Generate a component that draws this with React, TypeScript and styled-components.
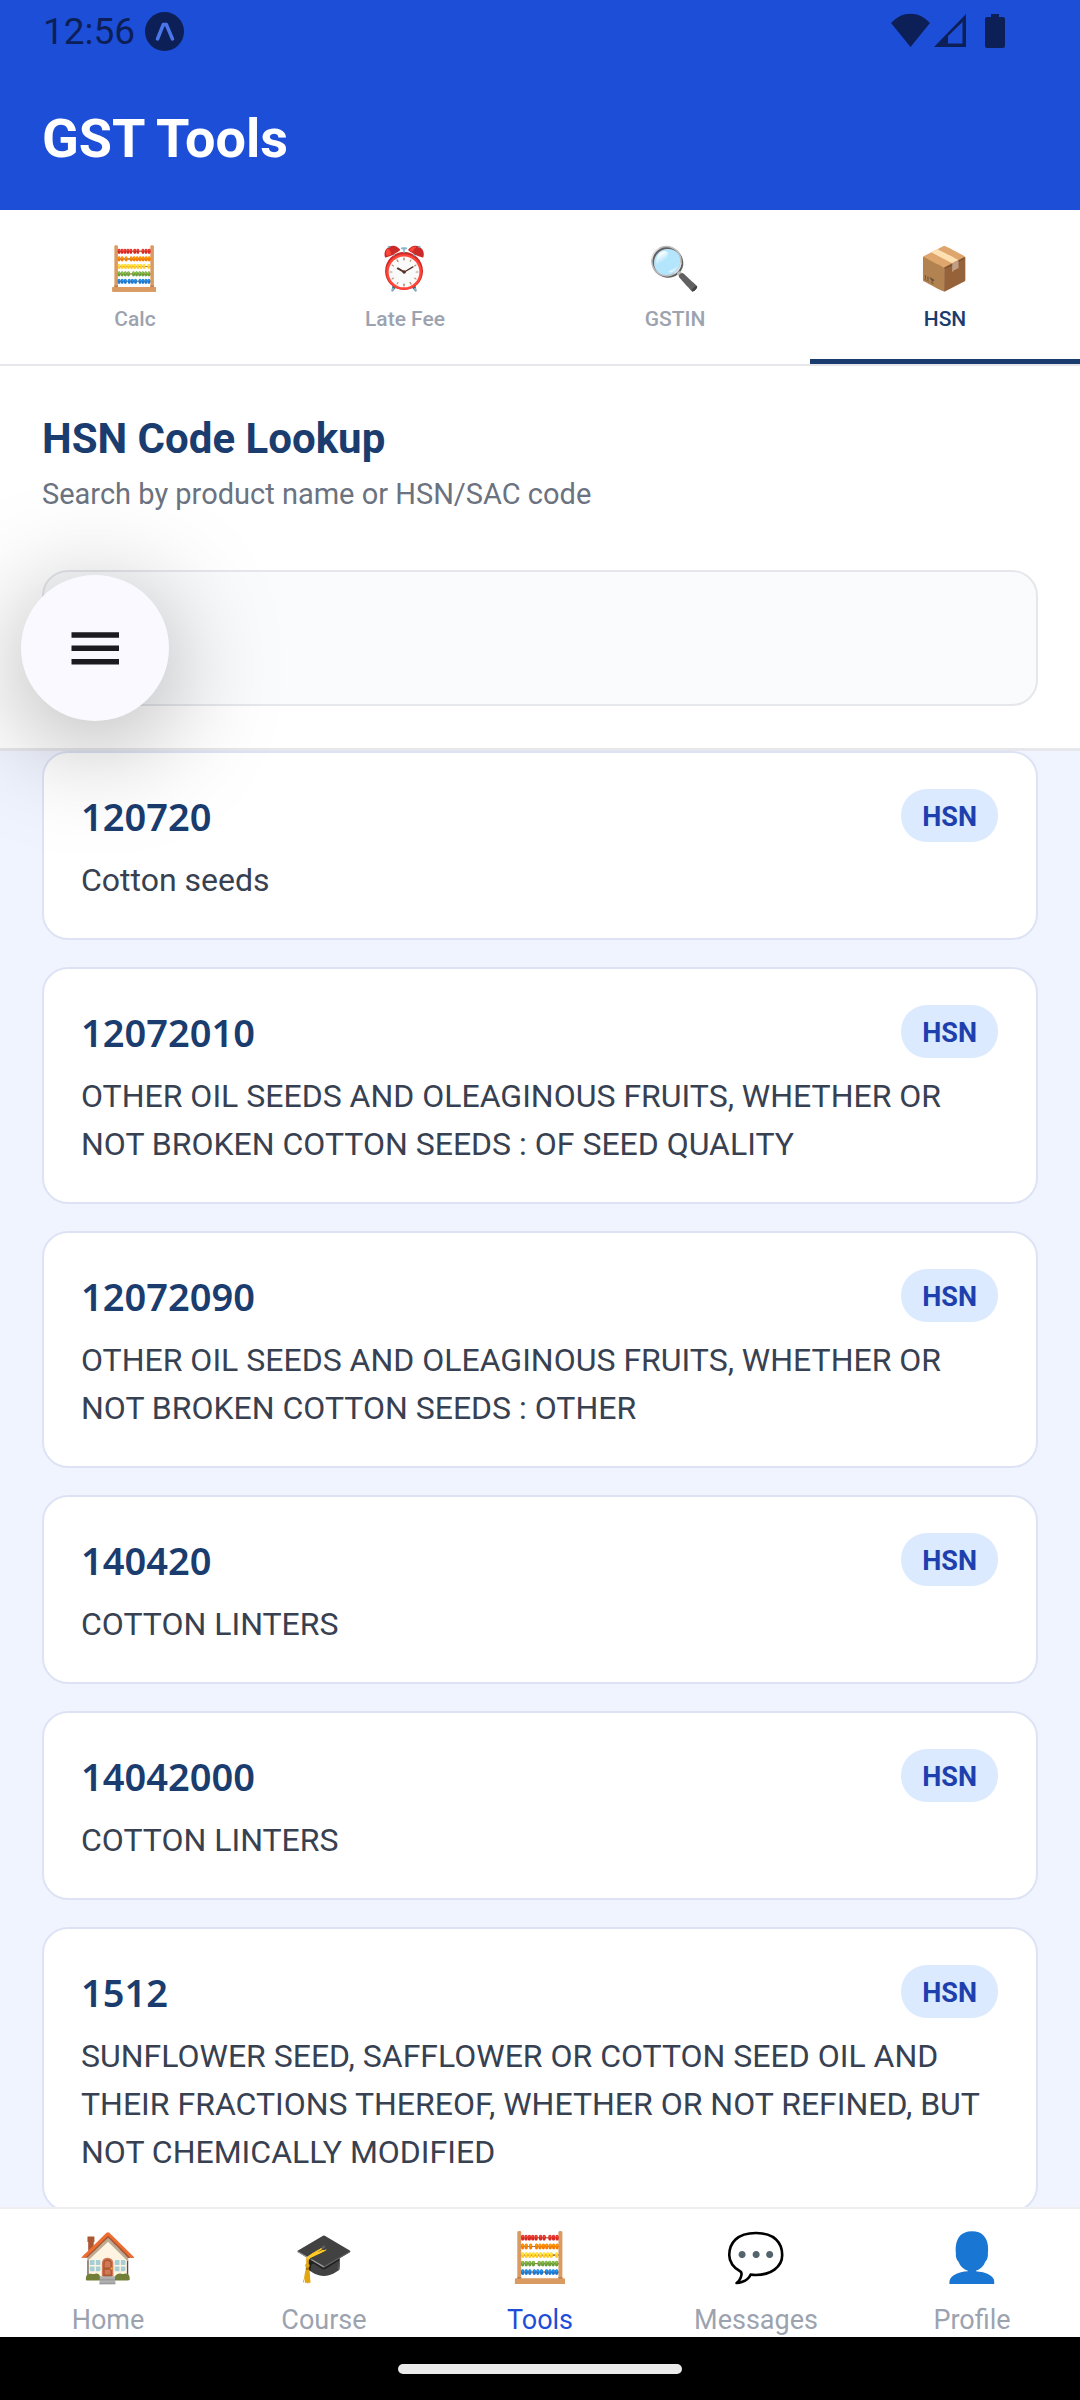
import * as React from "react";
import styled, { createGlobalStyle } from "styled-components";

const colors = {
  brand: "#1d4ed8",
  navy: "#1a3c6e",
  status: "#0c1f57",
  muted: "#9ca3af",
  line: "#e5e7eb",
  white: "#ffffff"
};

const GlobalStyle = createGlobalStyle`
  * { box-sizing: border-box; }
  body {
    margin: 0;
    font-family: Roboto, "Noto Color Emoji", sans-serif;
    background: #f0f4ff;
  }
  h1, h2, p, ul { margin: 0; padding: 0; }
  button { font-family: inherit; border: 0; padding: 0; cursor: pointer; }
`;

const SApp = styled.div`
  position: relative;
  display: flex;
  flex-direction: column;
  height: 100vh;
  overflow: hidden;
`;

const SHeader = styled.header`
  flex: none;
  background: ${colors.brand};
  height: 210px;
`;

const SStatusBar = styled.div`
  display: flex;
  align-items: center;
  justify-content: space-between;
  height: 62px;
  padding: 0 75px 0 43px;
  color: ${colors.status};
  font-size: 37px;
`;

const SStatusGroup = styled.div<{ $gap: number }>`
  display: flex;
  align-items: center;
  gap: ${({ $gap }) => $gap}px;

  svg { display: block; }
`;

const STitle = styled.h1`
  padding: 46px 42px 0;
  color: ${colors.white};
  font-size: 54px;
  line-height: 62px;
  font-weight: 700;
`;

const STabs = styled.div`
  flex: none;
  display: flex;
  background: ${colors.white};
  border-bottom: 2px solid ${colors.line};
`;

const STab = styled.button<{ $active: boolean }>`
  flex: 1;
  display: flex;
  flex-direction: column;
  align-items: center;
  gap: 13px;
  height: 154px;
  padding-top: 34px;
  background: none;
  border-bottom: 5px solid ${({ $active }) => ($active ? colors.navy : "transparent")};
  color: ${({ $active }) => ($active ? colors.navy : colors.muted)};
  font-size: 21px;
  line-height: 25px;
  font-weight: 500;
`;

const SEmoji = styled.span<{ $size: number }>`
  height: ${({ $size }) => $size}px;
  font-size: ${({ $size }) => $size - 8}px;
  line-height: ${({ $size }) => $size}px;
`;

const SLookup = styled.section`
  flex: none;
  padding: 48px 42px 42px;
  background: ${colors.white};
  border-bottom: 3px solid ${colors.line};
`;

const SLookupTitle = styled.h2`
  color: ${colors.navy};
  font-size: 42px;
  line-height: 50px;
  font-weight: 700;
`;

const SLookupHint = styled.p`
  margin: 12px 0 58px;
  color: #6b7280;
  font-size: 29px;
  line-height: 36px;
`;

const SSearch = styled.input`
  display: block;
  width: 100%;
  height: 136px;
  padding: 0 36px;
  background: #fafbfd;
  border: 2px solid ${colors.line};
  border-radius: 26px;
  font-family: inherit;
  font-size: 37px;
`;

const SResults = styled.ul`
  flex: 1;
  min-height: 0;
  display: flex;
  flex-direction: column;
  gap: 27px;
  padding: 0 42px;
  overflow: hidden;
  list-style: none;
`;

const SCard = styled.li`
  flex: none;
  padding: 36px 38px 34px 37px;
  background: ${colors.white};
  border: 2px solid #dde3f5;
  border-radius: 26px;
`;

const SCardHead = styled.div`
  display: flex;
  align-items: center;
  justify-content: space-between;
  height: 53px;
  margin-bottom: 14px;
`;

const SCode = styled.span`
  color: ${colors.navy};
  font-family: "Noto Sans", sans-serif;
  font-size: 38px;
  font-weight: 600;
`;

const SBadge = styled.span`
  padding: 3px 21px 0;
  background: #dbeafe;
  border-radius: 26px;
  color: #1e40af;
  font-size: 27px;
  line-height: 50px;
  font-weight: 700;
`;

const SDescription = styled.p`
  color: #374151;
  font-size: 32px;
  line-height: 48px;
`;

const SNav = styled.nav`
  flex: none;
  display: flex;
  height: 130px;
  background: ${colors.white};
  border-top: 2px solid #efeff1;
`;

const SNavLink = styled.a<{ $active: boolean }>`
  flex: 1;
  display: flex;
  flex-direction: column;
  align-items: center;
  gap: 18px;
  padding-top: 21px;
  color: ${({ $active }) => ($active ? colors.brand : colors.muted)};
  font-size: 27px;
  line-height: 32px;
  text-decoration: none;
`;

const SGestureBar = styled.div`
  flex: none;
  display: flex;
  align-items: center;
  justify-content: center;
  height: 63px;
  background: #000000;
`;

const SGesturePill = styled.div`
  width: 284px;
  height: 10px;
  background: #ebebeb;
  border-radius: 5px;
`;

const SMenuButton = styled.button`
  position: absolute;
  top: 575px;
  left: 21px;
  display: flex;
  align-items: center;
  justify-content: center;
  width: 148px;
  height: 146px;
  background: #f9f9ff;
  border-radius: 50%;
  box-shadow: 0 20px 112px rgba(0, 0, 0, 0.34);
`;

const tabs = [
  { icon: "🧮", label: "Calc" },
  { icon: "⏰", label: "Late Fee" },
  { icon: "🔍", label: "GSTIN" },
  { icon: "📦", label: "HSN" }
];

const links = [
  { icon: "🏠", label: "Home" },
  { icon: "🎓", label: "Course" },
  { icon: "🧮", label: "Tools" },
  { icon: "💬", label: "Messages" },
  { icon: "👤", label: "Profile" }
];

const results = [
  { code: "120720", description: "Cotton seeds" },
  {
    code: "12072010",
    description:
      "OTHER OIL SEEDS AND OLEAGINOUS FRUITS, WHETHER OR NOT BROKEN COTTON SEEDS : OF SEED QUALITY"
  },
  {
    code: "12072090",
    description:
      "OTHER OIL SEEDS AND OLEAGINOUS FRUITS, WHETHER OR NOT BROKEN COTTON SEEDS : OTHER"
  },
  { code: "140420", description: "COTTON LINTERS" },
  { code: "14042000", description: "COTTON LINTERS" },
  {
    code: "1512",
    description:
      "SUNFLOWER SEED, SAFFLOWER OR COTTON SEED OIL AND THEIR FRACTIONS THEREOF, WHETHER OR NOT REFINED, BUT NOT CHEMICALLY MODIFIED"
  }
];

const StatusBar = () => (
  <SStatusBar>
    <SStatusGroup $gap={10}>
      <span>12:56</span>
      <svg width="39" height="39" viewBox="0 0 39 39" fill="none">
        <circle cx="19.5" cy="19.5" r="19.5" fill={colors.status} />
        <path
          d="M12.5 27 18.300 12.500h3L27.500 27"
          stroke="#4a76ea"
          strokeWidth="3.500"
          strokeLinecap="round"
          strokeLinejoin="round"
        />
      </svg>
    </SStatusGroup>
    <SStatusGroup $gap={0}>
      <svg width="114" height="36" viewBox="0 0 114 36" fill={colors.status}>
        <path d="M0 10C11-2.500 28-2.500 39 10L19.500 34Z" />
        <path fillRule="evenodd" d="M43 34 75 1V34ZM57 23V30.500H71.500V9Z" />
        <path d="M100 1h8v3h4q2 0 2 2v27q0 2-2 2h-16q-2 0-2-2V6q0-2 2-2h4Z" />
      </svg>
    </SStatusGroup>
  </SStatusBar>
);

class App extends React.Component {
  public state = {
    tab: "HSN",
    query: ""
  };

  public selectTab = (tab: string) => this.setState({ tab });

  public changeQuery = (event: React.ChangeEvent<HTMLInputElement>) =>
    this.setState({ query: event.target.value });

  public render() {
    const { tab, query } = this.state;
    return (
      <SApp>
        <GlobalStyle />
        <SHeader>
          <StatusBar />
          <STitle>GST Tools</STitle>
        </SHeader>
        <STabs>
          {tabs.map(({ icon, label }) => (
            <STab key={label} $active={label === tab} onClick={() => this.selectTab(label)}>
              <SEmoji $size={50}>{icon}</SEmoji>
              {label}
            </STab>
          ))}
        </STabs>
        <SLookup>
          <SLookupTitle>HSN Code Lookup</SLookupTitle>
          <SLookupHint>Search by product name or HSN/SAC code</SLookupHint>
          <SSearch
            type="text"
            aria-label="Search by product name or HSN/SAC code"
            value={query}
            onChange={this.changeQuery}
          />
        </SLookup>
        <SResults>
          {results.map(({ code, description }) => (
            <SCard key={code}>
              <SCardHead>
                <SCode>{code}</SCode>
                <SBadge>HSN</SBadge>
              </SCardHead>
              <SDescription>{description}</SDescription>
            </SCard>
          ))}
        </SResults>
        <SNav>
          {links.map(({ icon, label }) => (
            <SNavLink key={label} href={`#${label.toLowerCase()}`} $active={label === "Tools"}>
              <SEmoji $size={56}>{icon}</SEmoji>
              {label}
            </SNavLink>
          ))}
        </SNav>
        <SGestureBar>
          <SGesturePill />
        </SGestureBar>
        <SMenuButton aria-label="Menu">
          <svg width="48" height="34" viewBox="0 0 48 34" fill="#1c1b20">
            <path d="M0.500 1.200h47.500v5.500H0.500zM0.500 14.500h47.500v5.500H0.500zM0.500 28h47.500v5.500H0.500z" />
          </svg>
        </SMenuButton>
      </SApp>
    );
  }
}

export default App;
